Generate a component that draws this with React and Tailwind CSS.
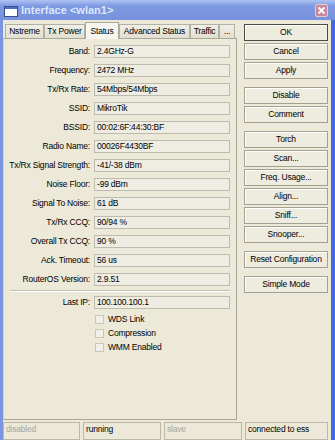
const fields = [
  ["Band:", "2.4GHz-G"],
  ["Frequency:", "2472 MHz"],
  ["Tx/Rx Rate:", "54Mbps/54Mbps"],
  ["SSID:", "MikroTik"],
  ["BSSID:", "00:02:6F:44:30:BF"],
  ["Radio Name:", "00026F4430BF"],
  ["Tx/Rx Signal Strength:", "-41/-38 dBm"],
  ["Noise Floor:", "-99 dBm"],
  ["Signal To Noise:", "61 dB"],
  ["Tx/Rx CCQ:", "90/94 %"],
  ["Overall Tx CCQ:", "90 %"],
  ["Ack. Timeout:", "56 us"],
  ["RouterOS Version:", "2.9.51"],
];

const tabs = [
  { name: "Nstreme", w: "w-[39px]" },
  { name: "Tx Power", w: "w-[41px]" },
  { name: "Status", w: "w-[34px]", active: true },
  { name: "Advanced Status", w: "w-[71px]" },
  { name: "Traffic", w: "w-[29px]" },
  { name: "...", w: "w-[16px]" },
];

// groups of buttons on the right, separated by a bigger gap
const buttonGroups = [
  ["OK", "Cancel", "Apply"],
  ["Disable", "Comment"],
  ["Torch", "Scan...", "Freq. Usage...", "Align...", "Sniff...", "Snooper..."],
  ["Reset Configuration"],
  ["Simple Mode"],
];

function Row({ label, value }) {
  return (
    <div className="flex items-center h-[13px] mb-[6px]">
      <div className="w-[86px] text-right whitespace-nowrap leading-none">
        {label}
      </div>
      <div className="ml-[4px] w-[136px] h-[13px] border border-[#BDBBAE] bg-[#EEECE3] px-[2px] flex items-center leading-none whitespace-nowrap">
        {value}
      </div>
    </div>
  );
}

function Check({ label }) {
  return (
    <div className="flex items-center h-[9px] mb-[5px] ml-[91px]">
      <div className="w-[9px] h-[9px] border border-[#C9C6B8] bg-[#F0EFE8]"></div>
      <span className="ml-[4px] leading-none">{label}</span>
    </div>
  );
}

function Btn({ label }) {
  return (
    <div
      className={`h-[17px] mb-[2px] flex items-center justify-center bg-[#EEEBDF] border leading-none shadow-[inset_1px_1px_0_#ffffff] ${
        label === "OK" ? "border-[#4A4943]" : "border-[#A3A091]"
      }`}
    >
      {label}
    </div>
  );
}

export default function App() {
  return (
    <div className="w-[335px] h-[440px] overflow-hidden flex flex-col bg-[#7C95E2] text-black text-[8.5px] tracking-[-0.2px] font-['Liberation_Sans',Arial,sans-serif]">
      {/* title bar */}
      <div className="h-[22px] flex items-center bg-gradient-to-b from-[#AEC3F1] via-[#7E9AE2] via-[30%] to-[#7892DD] pl-[4px] pr-[7px]">
        <div className="w-[14px] h-[11px] bg-white border border-[#3B4E86] mt-[2px] flex flex-col">
          <div className="h-[2px] bg-[#4A6FD0]"></div>
        </div>
        <span className="ml-[3px] mt-[1px] text-[11px] tracking-normal font-bold text-[#DCE6FA] leading-none">
          Interface &lt;wlan1&gt;
        </span>
        <div className="ml-auto w-[13px] h-[13px] rounded-[2px] border border-[#E8C9D2] bg-[#C7899C] flex items-center justify-center mt-[1px]">
          <svg width="9" height="9" viewBox="0 0 9 9">
            <path d="M1.5 1.5 L7.5 7.5 M7.5 1.5 L1.5 7.5" stroke="#fff" strokeWidth="1.8" />
          </svg>
        </div>
      </div>

      <div className="flex-1 flex">
        <div className="w-[3px] bg-[#7C95E2]"></div>
        <div className="w-[328px] bg-[#ECE9D8] flex flex-col">
          <div className="h-[400px] flex">
            {/* tabs and panel */}
            <div className="w-[234px] flex flex-col">
              <div className="h-[18px] flex items-end pl-[2px]">
                {tabs.map((t) =>
                  t.active ? (
                    <div
                      key={t.name}
                      className={`${t.w} h-[17px] -mb-[1px] bg-[#F6F5EF] border border-b-0 border-[#A9A79A] flex items-center justify-center leading-none whitespace-nowrap relative`}
                    >
                      {t.name}
                    </div>
                  ) : (
                    <div
                      key={t.name}
                      className={`${t.w} h-[14px] bg-gradient-to-b from-[#F0EFE8] to-[#E2DFD0] border border-b-0 border-[#B3B1A3] flex items-center justify-center leading-none whitespace-nowrap overflow-hidden`}
                    >
                      {t.name}
                    </div>
                  )
                )}
              </div>
              <div className="h-[382px] border border-[#A9A79A] border-l-[#D5D2C4] bg-[#ECE9D8] pt-[6px]">
                {fields.map(([l, v]) => (
                  <Row key={l} label={l} value={v} />
                ))}
                <div className="mx-[6px] mt-[-2px] h-[2px] border-t border-[#C2BFB1] border-b border-b-white"></div>
                <div className="mt-[4px]">
                  <Row label="Last IP:" value="100.100.100.1" />
                </div>
                <Check label="WDS Link" />
                <Check label="Compression" />
                <Check label="WMM Enabled" />
              </div>
            </div>

            {/* buttons */}
            <div className="w-[84px] ml-[7px] pt-[4px] flex flex-col">
              {buttonGroups.map((g, i) => (
                <div key={i} className={i > 0 ? "mt-[6px]" : ""}>
                  {g.map((b) => (
                    <Btn key={b} label={b} />
                  ))}
                </div>
              ))}
            </div>
          </div>

          {/* status bar */}
          <div className="mt-[2px] h-[18px] flex gap-[3px]">
            <div className="w-[77px] border border-[#BBB8AA] px-[2px] pt-[2px] leading-none text-[#A9A695]">
              disabled
            </div>
            <div className="w-[78px] border border-[#BBB8AA] px-[2px] pt-[2px] leading-none">
              running
            </div>
            <div className="w-[78px] border border-[#BBB8AA] px-[2px] pt-[2px] leading-none text-[#A9A695]">
              slave
            </div>
            <div className="w-[83px] border border-[#BBB8AA] px-[2px] pt-[2px] leading-none whitespace-nowrap">
              connected to ess
            </div>
          </div>
        </div>
        <div className="w-[4px] bg-[#3F6CE4]"></div>
      </div>
    </div>
  );
}
